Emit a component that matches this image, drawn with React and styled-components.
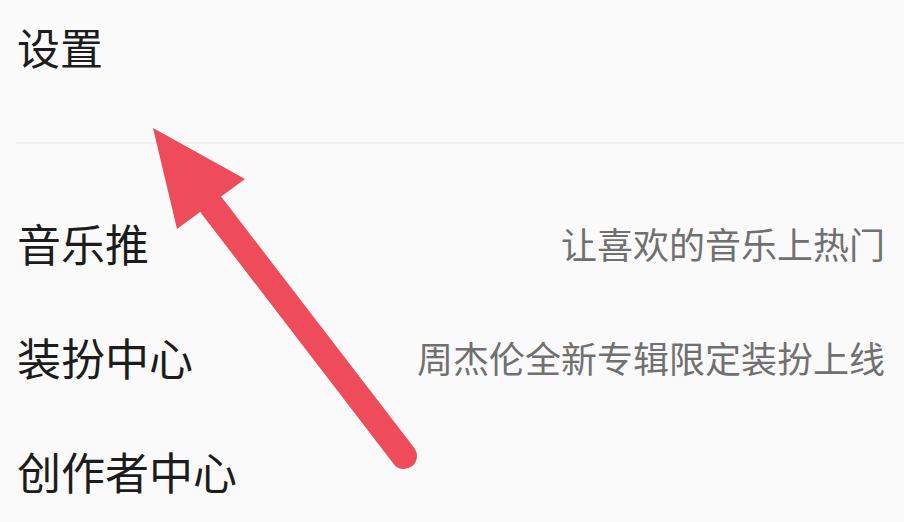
import React from 'react';
import styled, { createGlobalStyle } from 'styled-components';

const GlobalStyle = createGlobalStyle`
  html, body {
    margin: 0;
    padding: 0;
    background: #fafafa;
  }
  body {
    font-family: "Noto Sans CJK SC", "Noto Sans", sans-serif;
  }
`;

const rows = [
  { title: '音乐推', hint: '让喜欢的音乐上热门' },
  { title: '装扮中心', hint: '周杰伦全新专辑限定装扮上线' },
  { title: '创作者中心', hint: '' },
];

const App = () => {
  return (
    <>
      <GlobalStyle />
      <Page>
        <Header>
          <Title>设置</Title>
        </Header>
        <Divider />
        <List>
          {rows.map((row) => (
            <Row key={row.title}>
              <RowTitle>{row.title}</RowTitle>
              {row.hint && <Hint>{row.hint}</Hint>}
            </Row>
          ))}
        </List>
        <Arrow viewBox="0 0 904 522" aria-hidden="true">
          <line
            x1="212"
            y1="206"
            x2="404"
            y2="456"
            stroke="#ee4b5b"
            strokeWidth="26"
            strokeLinecap="round"
          />
          <polygon points="153,128 245,179 177,229" fill="#ee4b5b" />
        </Arrow>
      </Page>
    </>
  );
};

const Page = styled.div`
  position: relative;
  width: 904px;
  height: 522px;
  overflow: hidden;
  background: #fafafa;
`;

const Header = styled.div`
  display: flex;
  align-items: center;
  height: 93px;
  padding-left: 17px;
`;

const Title = styled.h1`
  margin: 0;
  font-size: 43px;
  font-weight: 400;
  line-height: 1;
  color: #1c1c1c;
`;

const Divider = styled.div`
  margin: 49px 0 0 16px;
  height: 2px;
  background: #f0f0f0;
`;

const List = styled.div`
  display: flex;
  flex-direction: column;
  padding-top: 42px;
`;

const Row = styled.div`
  display: flex;
  align-items: center;
  justify-content: space-between;
  height: 114px;
  padding: 0 19px 0 17px;
`;

const RowTitle = styled.span`
  font-size: 44px;
  line-height: 1;
  color: #1c1c1c;
`;

const Hint = styled.span`
  font-size: 36px;
  line-height: 1;
  color: #707070;
`;

const Arrow = styled.svg`
  position: absolute;
  left: 0;
  top: 0;
  width: 904px;
  height: 522px;
  pointer-events: none;
`;

export default App;
